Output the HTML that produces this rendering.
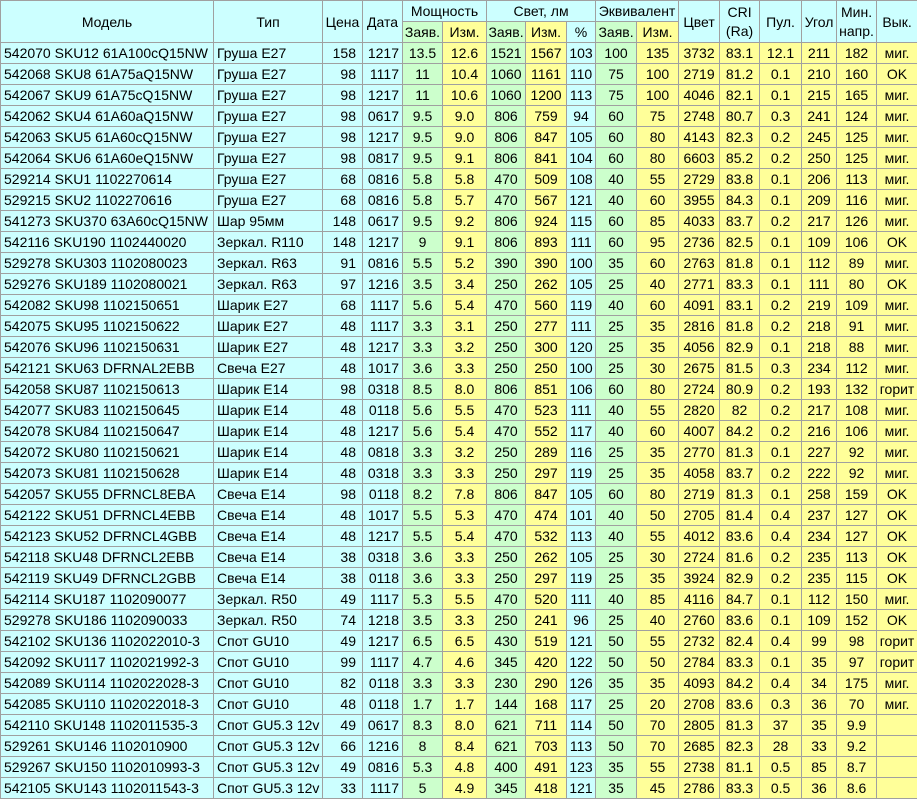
<!DOCTYPE html>
<html><head><meta charset="utf-8"><style>
html,body{margin:0;padding:0;background:#fff}
table{border-collapse:collapse;table-layout:fixed;width:917px;font-family:"Liberation Sans",Arial,sans-serif;font-size:14px;color:#000}
td,th{border:1px solid #a0a0a0;height:20px;padding:0 1px;white-space:nowrap;overflow:hidden;text-align:center;font-weight:normal;line-height:20px}
th{background:#ccffff}
th.g{background:#ccffcc}th.y{background:#ffff99}
td:nth-child(1),td:nth-child(2){text-align:left;padding-left:3px}
td:nth-child(3){text-align:right;padding-right:6px}
td:nth-child(4){text-align:right;padding-right:3px}
td:nth-child(-n+4),td:nth-child(9){background:#ccffff}
td:nth-child(5),td:nth-child(7),td:nth-child(10){background:#ccffcc}
td:nth-child(6),td:nth-child(8),td:nth-child(n+11){background:#ffff99}
th.s{line-height:19px}
</style></head><body>
<table>
<colgroup><col style="width:213px"><col style="width:109px"><col style="width:40px"><col style="width:40px"><col style="width:40px"><col style="width:44px"><col style="width:39px"><col style="width:41px"><col style="width:29px"><col style="width:41px"><col style="width:42px"><col style="width:41px"><col style="width:40px"><col style="width:42px"><col style="width:35px"><col style="width:40px"><col style="width:41px"></colgroup>
<tr><th rowspan="2">Модель</th><th rowspan="2">Тип</th><th rowspan="2">Цена</th><th rowspan="2">Дата</th><th colspan="2">Мощность</th><th colspan="3">Свет, лм</th><th colspan="2">Эквивалент</th><th rowspan="2">Цвет</th><th rowspan="2" class="s">CRI<br>(Ra)</th><th rowspan="2">Пул.</th><th rowspan="2">Угол</th><th rowspan="2" class="s">Мин.<br>напр.</th><th rowspan="2">Вык.</th></tr>
<tr><th class="g">Заяв.</th><th class="y">Изм.</th><th class="g">Заяв.</th><th class="y">Изм.</th><th>%</th><th class="g">Заяв.</th><th class="y">Изм.</th></tr>
<tr><td>542070 SKU12 61A100cQ15NW</td><td>Груша E27</td><td>158</td><td>1217</td><td>13.5</td><td>12.6</td><td>1521</td><td>1567</td><td>103</td><td>100</td><td>135</td><td>3732</td><td>83.1</td><td>12.1</td><td>211</td><td>182</td><td>миг.</td></tr>
<tr><td>542068 SKU8 61A75aQ15NW</td><td>Груша E27</td><td>98</td><td>1117</td><td>11</td><td>10.4</td><td>1060</td><td>1161</td><td>110</td><td>75</td><td>100</td><td>2719</td><td>81.2</td><td>0.1</td><td>210</td><td>160</td><td>OK</td></tr>
<tr><td>542067 SKU9 61A75cQ15NW</td><td>Груша E27</td><td>98</td><td>1217</td><td>11</td><td>10.6</td><td>1060</td><td>1200</td><td>113</td><td>75</td><td>100</td><td>4046</td><td>82.1</td><td>0.1</td><td>215</td><td>165</td><td>миг.</td></tr>
<tr><td>542062 SKU4 61A60aQ15NW</td><td>Груша E27</td><td>98</td><td>0617</td><td>9.5</td><td>9.0</td><td>806</td><td>759</td><td>94</td><td>60</td><td>75</td><td>2748</td><td>80.7</td><td>0.3</td><td>241</td><td>124</td><td>миг.</td></tr>
<tr><td>542063 SKU5 61A60cQ15NW</td><td>Груша E27</td><td>98</td><td>1217</td><td>9.5</td><td>9.0</td><td>806</td><td>847</td><td>105</td><td>60</td><td>80</td><td>4143</td><td>82.3</td><td>0.2</td><td>245</td><td>125</td><td>миг.</td></tr>
<tr><td>542064 SKU6 61A60eQ15NW</td><td>Груша E27</td><td>98</td><td>0817</td><td>9.5</td><td>9.1</td><td>806</td><td>841</td><td>104</td><td>60</td><td>80</td><td>6603</td><td>85.2</td><td>0.2</td><td>250</td><td>125</td><td>миг.</td></tr>
<tr><td>529214 SKU1 1102270614</td><td>Груша E27</td><td>68</td><td>0816</td><td>5.8</td><td>5.8</td><td>470</td><td>509</td><td>108</td><td>40</td><td>55</td><td>2729</td><td>83.8</td><td>0.1</td><td>206</td><td>113</td><td>миг.</td></tr>
<tr><td>529215 SKU2 1102270616</td><td>Груша E27</td><td>68</td><td>0816</td><td>5.8</td><td>5.7</td><td>470</td><td>567</td><td>121</td><td>40</td><td>60</td><td>3955</td><td>84.3</td><td>0.1</td><td>209</td><td>116</td><td>миг.</td></tr>
<tr><td>541273 SKU370 63A60cQ15NW</td><td>Шар 95мм</td><td>148</td><td>0617</td><td>9.5</td><td>9.2</td><td>806</td><td>924</td><td>115</td><td>60</td><td>85</td><td>4033</td><td>83.7</td><td>0.2</td><td>217</td><td>126</td><td>миг.</td></tr>
<tr><td>542116 SKU190 1102440020</td><td>Зеркал. R110</td><td>148</td><td>1217</td><td>9</td><td>9.1</td><td>806</td><td>893</td><td>111</td><td>60</td><td>95</td><td>2736</td><td>82.5</td><td>0.1</td><td>109</td><td>106</td><td>OK</td></tr>
<tr><td>529278 SKU303 1102080023</td><td>Зеркал. R63</td><td>91</td><td>0816</td><td>5.5</td><td>5.2</td><td>390</td><td>390</td><td>100</td><td>35</td><td>60</td><td>2763</td><td>81.8</td><td>0.1</td><td>112</td><td>89</td><td>миг.</td></tr>
<tr><td>529276 SKU189 1102080021</td><td>Зеркал. R63</td><td>97</td><td>1216</td><td>3.5</td><td>3.4</td><td>250</td><td>262</td><td>105</td><td>25</td><td>40</td><td>2771</td><td>83.3</td><td>0.1</td><td>111</td><td>80</td><td>OK</td></tr>
<tr><td>542082 SKU98 1102150651</td><td>Шарик E27</td><td>68</td><td>1117</td><td>5.6</td><td>5.4</td><td>470</td><td>560</td><td>119</td><td>40</td><td>60</td><td>4091</td><td>83.1</td><td>0.2</td><td>219</td><td>109</td><td>миг.</td></tr>
<tr><td>542075 SKU95 1102150622</td><td>Шарик E27</td><td>48</td><td>1117</td><td>3.3</td><td>3.1</td><td>250</td><td>277</td><td>111</td><td>25</td><td>35</td><td>2816</td><td>81.8</td><td>0.2</td><td>218</td><td>91</td><td>миг.</td></tr>
<tr><td>542076 SKU96 1102150631</td><td>Шарик E27</td><td>48</td><td>1217</td><td>3.3</td><td>3.2</td><td>250</td><td>300</td><td>120</td><td>25</td><td>35</td><td>4056</td><td>82.9</td><td>0.1</td><td>218</td><td>88</td><td>миг.</td></tr>
<tr><td>542121 SKU63 DFRNAL2EBB</td><td>Свеча E27</td><td>48</td><td>1017</td><td>3.6</td><td>3.3</td><td>250</td><td>250</td><td>100</td><td>25</td><td>30</td><td>2675</td><td>81.5</td><td>0.3</td><td>234</td><td>112</td><td>миг.</td></tr>
<tr><td>542058 SKU87 1102150613</td><td>Шарик E14</td><td>98</td><td>0318</td><td>8.5</td><td>8.0</td><td>806</td><td>851</td><td>106</td><td>60</td><td>80</td><td>2724</td><td>80.9</td><td>0.2</td><td>193</td><td>132</td><td>горит</td></tr>
<tr><td>542077 SKU83 1102150645</td><td>Шарик E14</td><td>48</td><td>0118</td><td>5.6</td><td>5.5</td><td>470</td><td>523</td><td>111</td><td>40</td><td>55</td><td>2820</td><td>82</td><td>0.2</td><td>217</td><td>108</td><td>миг.</td></tr>
<tr><td>542078 SKU84 1102150647</td><td>Шарик E14</td><td>48</td><td>1217</td><td>5.6</td><td>5.4</td><td>470</td><td>552</td><td>117</td><td>40</td><td>60</td><td>4007</td><td>84.2</td><td>0.2</td><td>216</td><td>106</td><td>миг.</td></tr>
<tr><td>542072 SKU80 1102150621</td><td>Шарик E14</td><td>48</td><td>0818</td><td>3.3</td><td>3.2</td><td>250</td><td>289</td><td>116</td><td>25</td><td>35</td><td>2770</td><td>81.3</td><td>0.1</td><td>227</td><td>92</td><td>миг.</td></tr>
<tr><td>542073 SKU81 1102150628</td><td>Шарик E14</td><td>48</td><td>0318</td><td>3.3</td><td>3.3</td><td>250</td><td>297</td><td>119</td><td>25</td><td>35</td><td>4058</td><td>83.7</td><td>0.2</td><td>222</td><td>92</td><td>миг.</td></tr>
<tr><td>542057 SKU55 DFRNCL8EBA</td><td>Свеча E14</td><td>98</td><td>0118</td><td>8.2</td><td>7.8</td><td>806</td><td>847</td><td>105</td><td>60</td><td>80</td><td>2719</td><td>81.3</td><td>0.1</td><td>258</td><td>159</td><td>OK</td></tr>
<tr><td>542122 SKU51 DFRNCL4EBB</td><td>Свеча E14</td><td>48</td><td>1017</td><td>5.5</td><td>5.3</td><td>470</td><td>474</td><td>101</td><td>40</td><td>50</td><td>2705</td><td>81.4</td><td>0.4</td><td>237</td><td>127</td><td>OK</td></tr>
<tr><td>542123 SKU52 DFRNCL4GBB</td><td>Свеча E14</td><td>48</td><td>1217</td><td>5.5</td><td>5.4</td><td>470</td><td>532</td><td>113</td><td>40</td><td>55</td><td>4012</td><td>83.6</td><td>0.4</td><td>234</td><td>127</td><td>OK</td></tr>
<tr><td>542118 SKU48 DFRNCL2EBB</td><td>Свеча E14</td><td>38</td><td>0318</td><td>3.6</td><td>3.3</td><td>250</td><td>262</td><td>105</td><td>25</td><td>30</td><td>2724</td><td>81.6</td><td>0.2</td><td>235</td><td>113</td><td>OK</td></tr>
<tr><td>542119 SKU49 DFRNCL2GBB</td><td>Свеча E14</td><td>38</td><td>0118</td><td>3.6</td><td>3.3</td><td>250</td><td>297</td><td>119</td><td>25</td><td>35</td><td>3924</td><td>82.9</td><td>0.2</td><td>235</td><td>115</td><td>OK</td></tr>
<tr><td>542114 SKU187 1102090077</td><td>Зеркал. R50</td><td>49</td><td>1117</td><td>5.3</td><td>5.5</td><td>470</td><td>520</td><td>111</td><td>40</td><td>85</td><td>4116</td><td>84.7</td><td>0.1</td><td>112</td><td>150</td><td>миг.</td></tr>
<tr><td>529278 SKU186 1102090033</td><td>Зеркал. R50</td><td>74</td><td>1218</td><td>3.5</td><td>3.3</td><td>250</td><td>241</td><td>96</td><td>25</td><td>40</td><td>2760</td><td>83.6</td><td>0.1</td><td>109</td><td>152</td><td>OK</td></tr>
<tr><td>542102 SKU136 1102022010-3</td><td>Спот GU10</td><td>49</td><td>1217</td><td>6.5</td><td>6.5</td><td>430</td><td>519</td><td>121</td><td>50</td><td>55</td><td>2732</td><td>82.4</td><td>0.4</td><td>99</td><td>98</td><td>горит</td></tr>
<tr><td>542092 SKU117 1102021992-3</td><td>Спот GU10</td><td>99</td><td>1117</td><td>4.7</td><td>4.6</td><td>345</td><td>420</td><td>122</td><td>50</td><td>50</td><td>2784</td><td>83.3</td><td>0.1</td><td>35</td><td>97</td><td>горит</td></tr>
<tr><td>542089 SKU114 1102022028-3</td><td>Спот GU10</td><td>82</td><td>0118</td><td>3.3</td><td>3.3</td><td>230</td><td>290</td><td>126</td><td>35</td><td>35</td><td>4093</td><td>84.2</td><td>0.4</td><td>34</td><td>175</td><td>миг.</td></tr>
<tr><td>542085 SKU110 1102022018-3</td><td>Спот GU10</td><td>48</td><td>0118</td><td>1.7</td><td>1.7</td><td>144</td><td>168</td><td>117</td><td>25</td><td>20</td><td>2708</td><td>83.6</td><td>0.3</td><td>36</td><td>70</td><td>миг.</td></tr>
<tr><td>542110 SKU148 1102011535-3</td><td>Спот GU5.3 12v</td><td>49</td><td>0617</td><td>8.3</td><td>8.0</td><td>621</td><td>711</td><td>114</td><td>50</td><td>70</td><td>2805</td><td>81.3</td><td>37</td><td>35</td><td>9.9</td><td></td></tr>
<tr><td>529261 SKU146 1102010900</td><td>Спот GU5.3 12v</td><td>66</td><td>1216</td><td>8</td><td>8.4</td><td>621</td><td>703</td><td>113</td><td>50</td><td>70</td><td>2685</td><td>82.3</td><td>28</td><td>33</td><td>9.2</td><td></td></tr>
<tr><td>529267 SKU150 1102010993-3</td><td>Спот GU5.3 12v</td><td>49</td><td>0816</td><td>5.3</td><td>4.8</td><td>400</td><td>491</td><td>123</td><td>35</td><td>55</td><td>2738</td><td>81.1</td><td>0.5</td><td>85</td><td>8.7</td><td></td></tr>
<tr><td>542105 SKU143 1102011543-3</td><td>Спот GU5.3 12v</td><td>33</td><td>1117</td><td>5</td><td>4.9</td><td>345</td><td>418</td><td>121</td><td>35</td><td>45</td><td>2786</td><td>83.3</td><td>0.5</td><td>36</td><td>8.6</td><td></td></tr>
</table>
</body></html>
